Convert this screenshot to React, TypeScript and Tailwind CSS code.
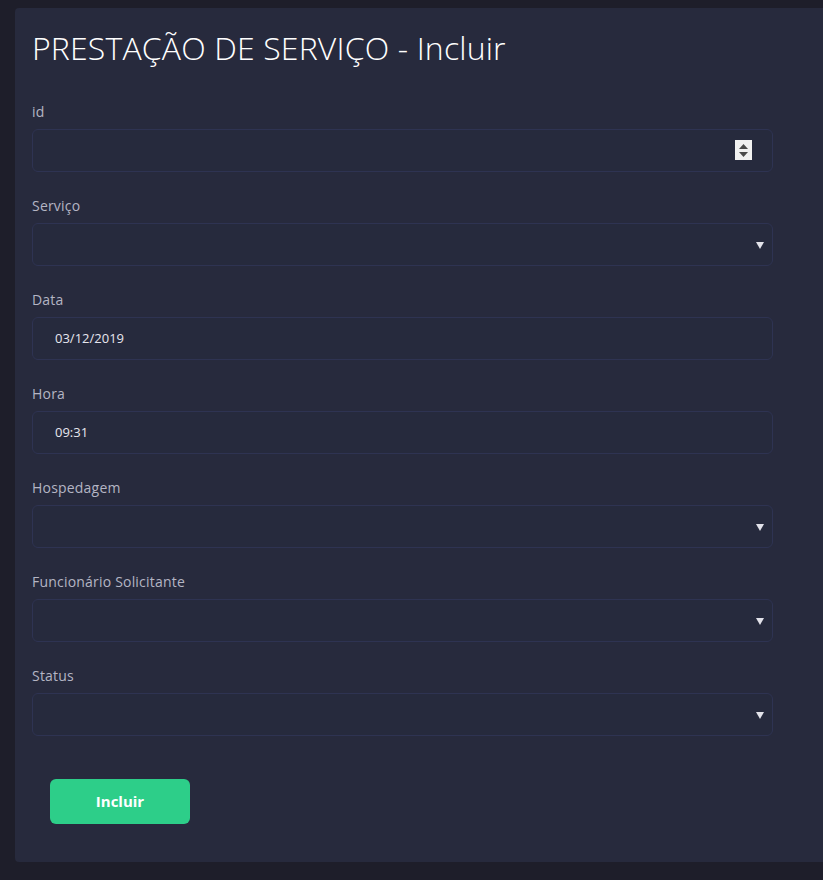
const fields = [
  { label: "id", kind: "number", value: "" },
  { label: "Serviço", kind: "select", value: "" },
  { label: "Data", kind: "text", value: "03/12/2019" },
  { label: "Hora", kind: "text", value: "09:31" },
  { label: "Hospedagem", kind: "select", value: "" },
  { label: "Funcionário Solicitante", kind: "select", value: "" },
  { label: "Status", kind: "select", value: "" },
];

function Field({ label, kind, value }: { label: string; kind: string; value: string }) {
  return (
    <div className="mb-[24px]">
      <div className="h-5 text-[14px] tracking-[0.2px] leading-5 text-[#b4b5c4] mb-[7px]">{label}</div>
      <div className="relative h-[43px] w-[741px] rounded-md border border-[#2e3352] bg-[#262a3d] flex items-center pl-[22px]">
        <span className="text-[13px] text-[#e6e6ee]">{value}</span>
        {kind === "number" && (
          <div className="absolute right-[20px] top-[10px] w-[17px] h-[20px] bg-[#f1f1f1] flex flex-col items-center justify-center gap-[3px]">
            <svg width="9" height="5" viewBox="0 0 9 5">
              <path d="M4.5 0L9 5H0z" fill="#4a4a4a" />
            </svg>
            <svg width="9" height="5" viewBox="0 0 9 5">
              <path d="M0 0h9L4.5 5z" fill="#4a4a4a" />
            </svg>
          </div>
        )}
        {kind === "select" && (
          <svg className="absolute right-[8px] top-[18px]" width="8" height="7" viewBox="0 0 8 7">
            <path d="M0 0h8L4 7z" fill="#e2e2ea" />
          </svg>
        )}
      </div>
    </div>
  );
}

export default function App() {
  return (
    <div
      className="min-h-[880px] bg-[#1e1e2a] pl-[15px] pt-[8px] overflow-hidden"
      style={{ fontFamily: '"Open Sans", "Noto Sans", sans-serif' }}
    >
      <div className="w-[830px] h-[854px] bg-[#272a3d] rounded-l-[4px] pl-[17px] pt-[20px]">
        <h1 className="h-10 text-[32px] tracking-[0.15px] leading-10 font-light text-white mb-[34px]">
          PRESTAÇÃO DE SERVIÇO - Incluir
        </h1>
        {fields.map((f) => (
          <Field key={f.label} {...f} />
        ))}
        <button className="ml-[18px] mt-[19px] w-[140px] h-[45px] rounded-md bg-[#2dce89] text-white text-[15px] font-bold">
          Incluir
        </button>
      </div>
    </div>
  );
}
